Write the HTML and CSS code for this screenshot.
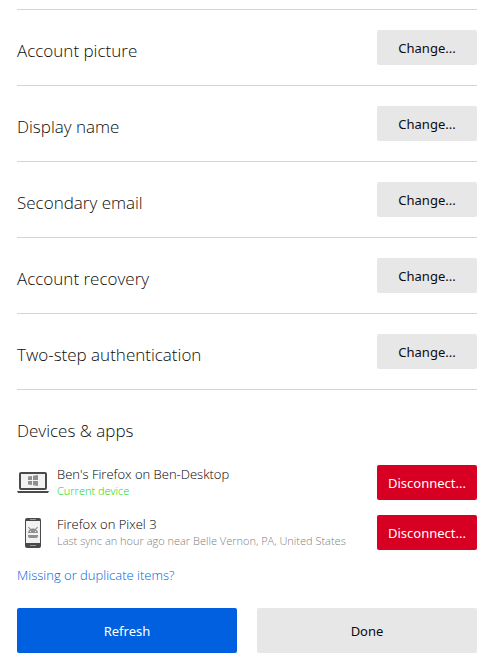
FILE: index.html
```html
<!DOCTYPE html>
<html lang="en">
<head>
    <meta charset="utf-8">
    <meta name="viewport" content="width=device-width, initial-scale=1">
    <title>Account settings</title>
    <link rel="stylesheet" href="styles.css">
</head>
<body>
    <main class="settings">
        <section class="row">
            <h2>Account picture</h2>
            <button class="btn">Change...</button>
        </section>
        <section class="row">
            <h2>Display name</h2>
            <button class="btn">Change...</button>
        </section>
        <section class="row">
            <h2>Secondary email</h2>
            <button class="btn">Change...</button>
        </section>
        <section class="row">
            <h2>Account recovery</h2>
            <button class="btn">Change...</button>
        </section>
        <section class="row">
            <h2>Two-step authentication</h2>
            <button class="btn">Change...</button>
        </section>

        <section class="devices">
            <div class="row">
                <h2>Devices &amp; apps</h2>
            </div>
            <ul class="device-list">
                <li class="device">
                    <!-- laptop -->
                    <svg class="device-icon" viewBox="0 0 32 35" aria-hidden="true">
                        <rect x="3" y="8" width="26" height="16" rx="1" fill="#f2f2f2" stroke="#4a4a4a" stroke-width="2"/>
                        <path d="M0 26h32l-1 2H1z" fill="#4a4a4a"/>
                        <path d="M11 11.600l4-.6v4h-4zM16 10.800l5-.8v5h-5zM11 16h4v4l-4-.6zM16 16h5v5l-5-.8z" fill="#8f8f8f"/>
                    </svg>
                    <div class="device-info">
                        <div class="device-name">Ben's Firefox on Ben-Desktop</div>
                        <div class="device-status current">Current device</div>
                    </div>
                    <button class="btn danger">Disconnect...</button>
                </li>
                <li class="device">
                    <!-- phone -->
                    <svg class="device-icon" viewBox="0 0 32 35" aria-hidden="true">
                        <rect x="8" y="3" width="16" height="30" rx="2" fill="#4a4a4a"/>
                        <rect x="9" y="6" width="14" height="22" fill="#f2f2f2"/>
                        <path d="M13 4.500h6M13 30.500h6" stroke="#9a9a9a"/>
                        <path d="M11 18c0-2 1-3 2-3.600l-2-2 .7-.7 2.300 2.200c1.300-.4 2.700-.4 4 0l2.300-2.200.7.7-2 2c1 .6 2 1.600 2 3.600zM11 20h10v1q0 2-2 2h-6q-2 0-2-2z" fill="#8f8f8f"/>
                        <path d="M13 16.500h1M18 16.500h1" stroke="#f2f2f2"/>
                    </svg>
                    <div class="device-info">
                        <div class="device-name">Firefox on Pixel 3</div>
                        <div class="device-status">Last sync an hour ago near Belle Vernon, PA, United States</div>
                    </div>
                    <button class="btn danger">Disconnect...</button>
                </li>
            </ul>
            <a class="help-link" href="#">Missing or duplicate items?</a>
            <div class="actions">
                <button class="btn primary">Refresh</button>
                <button class="btn">Done</button>
            </div>
        </section>
    </main>
</body>
</html>
```
FILE: styles.css
```css
body {
    margin: 0;
    background: #fff;
    color: #0c0c0d;
    font-family: "Open Sans", "Noto Sans", sans-serif;
    font-size: 13px;
    font-weight: 300;
}

.settings {
    padding: 9px 18px 7px 17px;
}

.row {
    display: flex;
    justify-content: space-between;
    align-items: flex-end;
    min-height: 35px;
    padding: 20px 0;
    border-top: 1px solid #d4d4d4;
}

h2 {
    margin: 0;
    font-size: 17px;
    font-weight: 300;
    line-height: 28px;
    color: #0c0c0d;
}

.btn {
    flex: none;
    width: 100px;
    height: 35px;
    padding: 0;
    border: none;
    border-radius: 2px;
    background: #e7e7e7;
    color: #0c0c0d;
    font-family: "Noto Sans", sans-serif;
    font-size: 13px;
    cursor: pointer;
}

.btn.danger {
    background: #d70022;
    color: #fff;
}

.btn.primary {
    background: #0060df;
    color: #fff;
}

.device-list {
    display: flex;
    flex-direction: column;
    gap: 15px;
    margin: 0;
    padding: 0;
    list-style: none;
}

.device {
    display: flex;
    align-items: flex-start;
    gap: 8px;
}

.device-icon {
    flex: none;
    width: 32px;
    height: 35px;
}

.device-info {
    flex: 1;
    min-width: 0;
}

.device-name {
    line-height: 18px;
    color: #000;
}

.device-status {
    font-size: 11px;
    line-height: 15px;
    color: #808080;
}

.device-status.current {
    color: #12d600;
}

.help-link {
    display: block;
    width: fit-content;
    margin-top: 15px;
    line-height: 20px;
    color: #0060df;
    text-decoration: none;
}

.help-link:hover {
    text-decoration: underline;
}

.actions {
    display: grid;
    grid-template-columns: 1fr 1fr;
    gap: 20px;
    margin-top: 23px;
}

.actions .btn {
    width: 100%;
    height: 45px;
}
```
